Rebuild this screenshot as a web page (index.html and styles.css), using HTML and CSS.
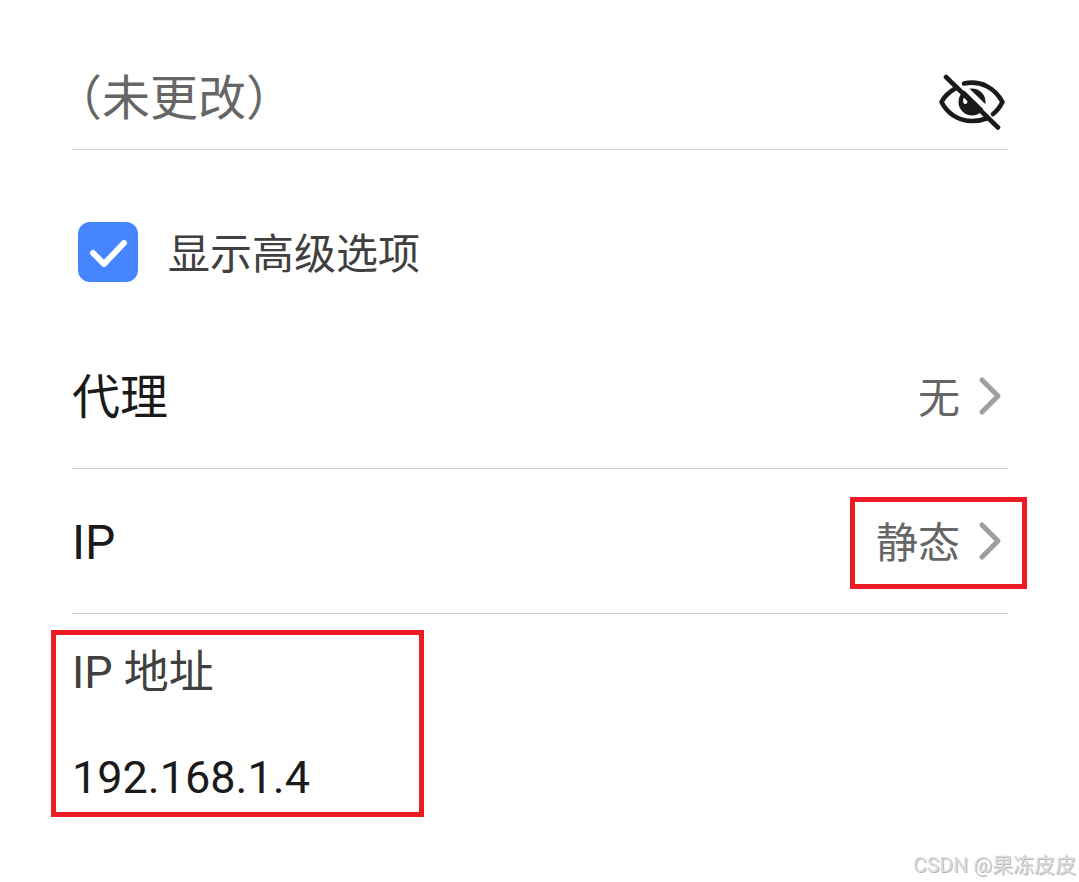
FILE: index.html
```
<!DOCTYPE html>
<html lang="zh-CN">
<head>
  <meta charset="UTF-8" />
  <meta name="viewport" content="width=device-width, initial-scale=1" />
  <title>WLAN</title>
  <link rel="stylesheet" href="styles.css">
</head>
<body>
  <form class="wifi-form">
    <div class="password-row">
      <input type="text" class="password-input" id="password" placeholder="（未更改）" aria-label="密码" />
      <button type="button" class="eye-button" aria-label="显示密码">
        <svg class="eye-icon" viewBox="0 0 68 56" fill="none" stroke="#1a1a1a" stroke-width="4.6" stroke-linecap="round" stroke-linejoin="round">
          <circle cx="34" cy="28" r="13.5" fill="#1a1a1a" stroke="none" />
          <ellipse cx="27.3" cy="26.5" rx="2.2" ry="3.6" fill="#fff" stroke="none" />
          <path d="M12 -1L64 50" stroke="#fff" stroke-width="5" />
          <path d="M18 14C11 18 6 23 3.5 28C9 39 20 47 34 47C40 47 45 46 50 44" />
          <path d="M26 9.5C43 6 57 14 64.5 28C62 33 59 37 55 40" />
          <path d="M8 3L60 53.5" />
        </svg>
      </button>
    </div>

    <label class="advanced-row">
      <input type="checkbox" class="advanced-check" checked />
      <span class="advanced-text">显示高级选项</span>
    </label>

    <button type="button" class="option-row">
      <span class="option-name">代理</span>
      <span class="option-value">
        <span class="option-text">无</span>
        <svg class="chevron" viewBox="0 0 24 40"><path d="M4 4L20 20L4 36" /></svg>
      </span>
    </button>

    <button type="button" class="option-row">
      <span class="option-name">IP</span>
      <span class="option-value marked">
        <span class="option-text">静态</span>
        <svg class="chevron" viewBox="0 0 24 40"><path d="M4 4L20 20L4 36" /></svg>
      </span>
    </button>

    <div class="ip-field marked">
      <label for="ip">IP 地址</label>
      <input type="text" id="ip" value="192.168.1.4" />
    </div>
  </form>
  <p class="watermark">CSDN @果冻皮皮</p>
</body>
</html>
```
FILE: styles.css
```
* {
  margin: 0;
  padding: 0;
  box-sizing: border-box;
}

body {
  min-height: 100vh;
  position: relative;
  background: #fff;
  color: #1a1a1a;
  font-family: Roboto, "Noto Sans CJK SC", sans-serif;
}

input,
button {
  font-family: inherit;
  color: inherit;
  border: none;
  background: none;
}

.wifi-form {
  padding: 48px 71px 0 72px;
}

.password-row {
  display: flex;
  align-items: center;
  height: 102px;
  border-bottom: 1px solid #d9d9d9;
}

.password-input {
  flex: 1;
  min-width: 0;
  height: 96px;
  padding-left: 6px;
  font-size: 48px;
  font-feature-settings: "halt";
}

.password-input::placeholder {
  color: #666;
  opacity: 1;
}

.eye-button {
  display: flex;
  padding: 6px 2px 0;
  cursor: pointer;
}

.eye-icon {
  width: 68px;
  height: 56px;
}

.advanced-row {
  display: flex;
  align-items: center;
  gap: 30px;
  padding: 69px 6px 39px;
  font-size: 42px;
  line-height: 60px;
  color: #404040;
}

.advanced-text {
  padding-top: 6px;
}

.advanced-check {
  appearance: none;
  width: 60px;
  height: 60px;
  border-radius: 12px;
}

.advanced-check:checked {
  background: #4784ff url("data:image/svg+xml,%3Csvg xmlns='http://www.w3.org/2000/svg' viewBox='0 0 60 60'%3E%3Cpath d='M15 31L26 42L46 21' fill='none' stroke='white' stroke-width='6' stroke-linecap='round' stroke-linejoin='round'/%3E%3C/svg%3E");
}

.option-row {
  display: flex;
  align-items: center;
  justify-content: space-between;
  width: 100%;
  height: 145px;
  border-bottom: 1px solid #c8c8c8;
  cursor: pointer;
}

.option-name {
  padding-top: 4px;
  font-size: 48px;
  line-height: 60px;
}

.option-value {
  display: flex;
  align-items: center;
  gap: 18px;
  padding-right: 6px;
  font-size: 42px;
  color: #666;
}

.option-text {
  padding-top: 6px;
  line-height: 60px;
}

.chevron {
  width: 24px;
  height: 40px;
  fill: none;
  stroke: #9e9e9e;
  stroke-width: 5;
  stroke-linecap: round;
  stroke-linejoin: round;
}

.marked {
  border: 5px solid #ed1c24;
}

.option-value.marked {
  height: 92px;
  margin: 4px -19px 0 0;
  padding: 0 20px 4px 21px;
}

.ip-field {
  display: flex;
  flex-direction: column;
  gap: 40px;
  width: 373px;
  margin: 16px 0 0 -21px;
  padding: 6px 16px 3px;
  font-size: 45px;
}

.ip-field label {
  line-height: 64px;
  color: #404040;
}

.ip-field input {
  width: 100%;
  height: 64px;
  font-size: 45px;
}

.watermark {
  position: absolute;
  right: 3px;
  bottom: 2px;
  font-size: 21px;
  line-height: 30px;
  color: #dcdcdc;
  text-shadow: 1px 1px 0 #b8b8b8;
}
```
